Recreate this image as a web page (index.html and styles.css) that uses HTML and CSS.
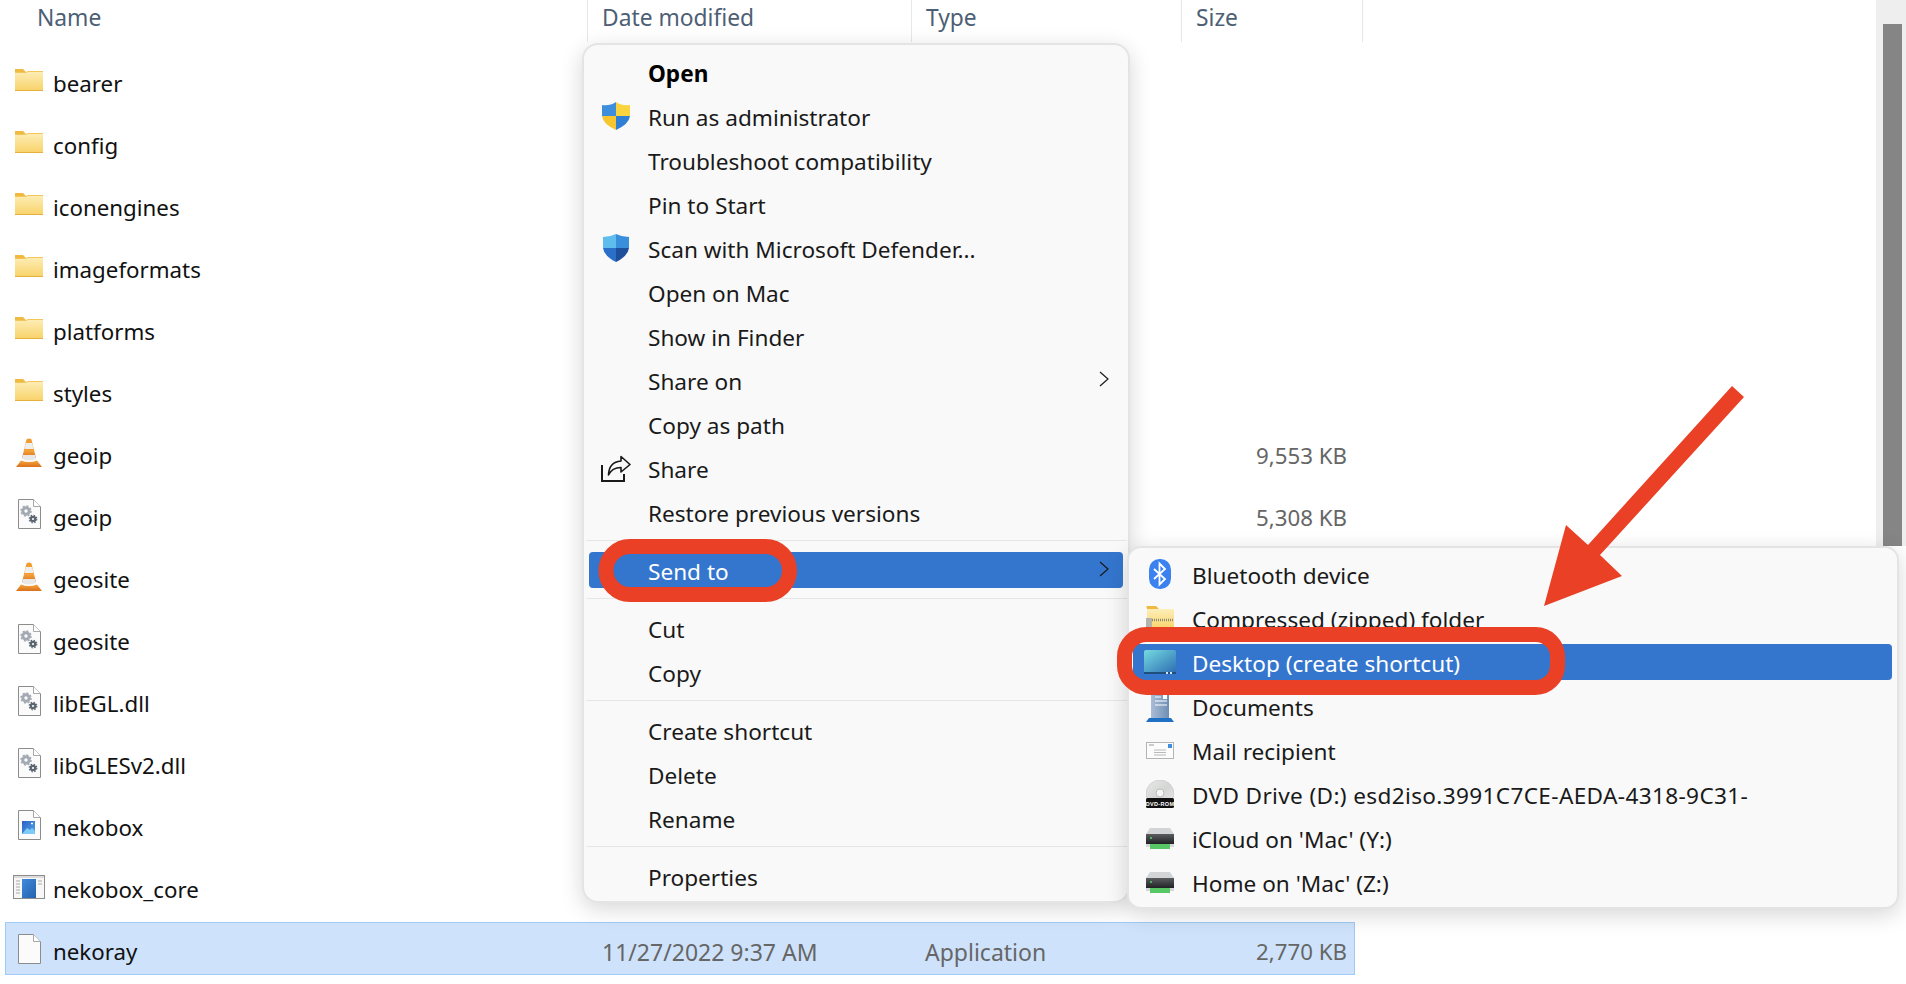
FILE: index.html
```html
<!DOCTYPE html>
<html lang="en">
<head>
    <meta charset="UTF-8">
    <meta name="viewport" content="width=device-width, initial-scale=1.0">
    <title>Send to desktop</title>
    <link rel="stylesheet" href="styles.css">
</head>
<body>
    <!-- shared icons -->
    <svg class="icon-defs" aria-hidden="true">
        <defs>
            <linearGradient id="folder-fill" x1="0" y1="0" x2="0" y2="1"><stop offset="0" stop-color="#fdeeb8"/><stop offset="1" stop-color="#f8d268"/></linearGradient>
            <linearGradient id="cone-fill" x1="0" y1="0" x2="0" y2="1"><stop offset="0" stop-color="#f6a63c"/><stop offset="1" stop-color="#d9701c"/></linearGradient>
            <linearGradient id="picture-fill" x1="0" y1="0" x2="1" y2="1"><stop offset="0" stop-color="#2f5fc4"/><stop offset="1" stop-color="#4fa8ea"/></linearGradient>
            <linearGradient id="app-fill" x1="0" y1="0" x2="1" y2="1"><stop offset="0" stop-color="#3f8bdc"/><stop offset="1" stop-color="#2560ad"/></linearGradient>
            <linearGradient id="screen-fill" x1="0" y1="0" x2="1" y2="1"><stop offset="0" stop-color="#74dbe0"/><stop offset="1" stop-color="#2f6fb4"/></linearGradient>
            <linearGradient id="doc-fill" x1="0" y1="0" x2="1" y2="0"><stop offset="0" stop-color="#a9bdd6"/><stop offset="1" stop-color="#6f8eb4"/></linearGradient>
            <linearGradient id="drive-fill" x1="0" y1="0" x2="0" y2="1"><stop offset="0" stop-color="#5a5d60"/><stop offset="1" stop-color="#202224"/></linearGradient>
            <linearGradient id="disc-fill" x1="0" y1="0" x2="1" y2="1"><stop offset="0" stop-color="#e9e9e9"/><stop offset="0.5" stop-color="#d3d6d3"/><stop offset="1" stop-color="#f0e8f0"/></linearGradient>
        </defs>
        <symbol id="i-folder" viewBox="0 0 28 22">
            <path d="M0 2a1 1 0 0 1 1-2h7l3 3H0z" fill="#f0b93f"/>
            <path d="M0 3h11l2-1h15v20H0z" fill="url(#folder-fill)"/>
            <path d="M0 21h28v1H0z" fill="#e4b13f"/>
            <path d="M0 3h11l2-1h15v1H13l-2 1H0z" fill="#f3c65a"/>
        </symbol>
        <symbol id="i-cone" viewBox="0 0 26 29">
            <path d="M10.5 1.5Q13 -.5 15.500 1.500L18 12H8z" fill="#f29b2e"/>
            <path d="M9.800 5h6.400l1.300 6H8.500z" fill="#efefef"/>
            <path d="M8 12h10l2 8H6z" fill="url(#cone-fill)"/>
            <path d="M6.800 17h12.400l.8 4q-7 3-14 0z" fill="#e8e8e8"/>
            <path d="M5 22.500q8 3 16 0l5 6.500H0z" fill="url(#cone-fill)"/>
        </symbol>
        <symbol id="i-page" viewBox="0 0 23 30">
            <path d="M.5.5h15l7 7v22H.5z" fill="#fbfbfb" stroke="#8c8c8c"/>
            <path d="M15.500.5v7h7" fill="#fff" stroke="#a8a8a8"/>
        </symbol>
        <symbol id="i-gears" viewBox="0 0 23 30">
            <use href="#i-page"/>
            <circle cx="8" cy="12" r="3.200" fill="none" stroke="#a3a9b2" stroke-width="3"/>
            <circle cx="8" cy="12" r="5" fill="none" stroke="#a3a9b2" stroke-width="1.500" stroke-dasharray="2 1.900"/>
            <circle cx="15" cy="20" r="2.200" fill="none" stroke="#5b6671" stroke-width="2.200"/>
            <circle cx="15" cy="20" r="3.800" fill="none" stroke="#5b6671" stroke-width="1.200" stroke-dasharray="1.500 1.500"/>
        </symbol>
        <symbol id="i-image" viewBox="0 0 23 30">
            <use href="#i-page"/>
            <rect x="4" y="11" width="13" height="13" fill="url(#picture-fill)"/>
            <path d="M4 24l5-6 3 2 2-2 3 3v3z" fill="#7ecbf5"/>
            <path d="M13 13.500h2M14 12.500v2" stroke="#fff"/>
        </symbol>
        <symbol id="i-app" viewBox="0 0 32 24">
            <rect x=".5" y=".5" width="31" height="23" fill="#f7f7f7" stroke="#8c8c8c"/>
            <path d="M1 1h30v2H1z" fill="#dcdcdc"/>
            <rect x="9" y="4" width="14" height="19" fill="url(#app-fill)"/>
            <path d="M3 6h4M3 9h4M3 12h4M3 15h4M3 18h4M25 6h4M25 9h4" stroke="#a8a8a8"/>
        </symbol>
        <symbol id="i-blank" viewBox="0 0 23 30">
            <use href="#i-page"/>
        </symbol>
        <symbol id="i-uac" viewBox="0 0 28 28">
            <path d="M14 0Q20 4 28 3V14H14z" fill="#f9d43f"/>
            <path d="M14 0Q8 4 0 3V14H14z" fill="#3d8fdb"/>
            <path d="M0 14H14V28Q1 22 0 14z" fill="#f7c52e"/>
            <path d="M28 14H14V28Q27 22 28 14z" fill="#2f7fd4"/>
        </symbol>
        <symbol id="i-defender" viewBox="0 0 28 28">
            <path d="M14 0Q8 3 1 3V14H14z" fill="#5ebdec"/>
            <path d="M14 0Q20 3 27 3V14H14z" fill="#3a8fdc"/>
            <path d="M1 14H14V28Q2 22 1 14z" fill="#2a6fc8"/>
            <path d="M27 14H14V28Q26 22 27 14z" fill="#1f4f9a"/>
        </symbol>
        <symbol id="i-share" viewBox="0 0 30 27">
            <path d="M1 10V26H23V19" fill="none" stroke="#1a1a1a" stroke-width="2"/>
            <path d="M20 1.500L29 9.500L20 17V12.500Q11 12.500 7.500 20Q8 7 20 6z" fill="none" stroke="#1a1a1a" stroke-width="1.600" stroke-linejoin="round"/>
        </symbol>
        <symbol id="i-chevron" viewBox="0 0 10 16">
            <path d="M1 1l8 7-8 7" fill="none" stroke="#1a1a1a" stroke-width="1.200"/>
        </symbol>
        <symbol id="i-bluetooth" viewBox="0 0 22 30">
            <rect width="22" height="30" rx="10.500" fill="#3b82f0"/>
            <path d="M5 10l11 10-5.500 5.500V4.500L16 10 5 20" fill="none" stroke="#fff" stroke-width="1.800"/>
        </symbol>
        <symbol id="i-zip" viewBox="0 0 28 24">
            <path d="M1 2a1 1 0 0 1 1-2h8l3 3H1z" fill="#f0b93f"/>
            <rect x="1" y="3" width="27" height="21" fill="url(#folder-fill)"/>
            <path d="M4 14h24" stroke="#8f8a70" stroke-width="2.500" stroke-dasharray="1 1"/>
            <rect x="0" y="12" width="6" height="12" fill="#b4b4ac"/>
        </symbol>
        <symbol id="i-desktop" viewBox="0 0 32 24">
            <path d="M2 0h28a2 2 0 0 1 2 2v20H0V2a2 2 0 0 1 2-2z" fill="url(#screen-fill)"/>
            <path d="M0 22h32v2H0z" fill="#1f4f7e"/>
            <path d="M22 22h2v2h-2zM26 22h2v2h-2z" fill="#d6e6f2"/>
        </symbol>
        <symbol id="i-documents" viewBox="0 0 28 32">
            <rect x="5" y="0" width="18" height="28" fill="url(#doc-fill)"/>
            <path d="M9 7h6M9 11h12M9 15h12" stroke="#fff" stroke-width="1.200"/>
            <rect x="17" y="5" width="4" height="4" fill="#fff"/>
            <path d="M3 28h22l3 4H0z" fill="#1f6fc4"/>
        </symbol>
        <symbol id="i-mail" viewBox="0 0 28 17">
            <rect x=".5" y=".5" width="27" height="16" fill="#fcfcfc" stroke="#b4b4b4"/>
            <path d="M3 3h5" stroke="#9a9a9a"/>
            <path d="M8 8h12M8 10.500h12M8 13h12" stroke="#a8a8a8" stroke-width=".8"/>
            <rect x="22" y="2" width="4" height="4" fill="#3f8fe0"/>
        </symbol>
        <symbol id="i-drive" viewBox="0 0 28 21">
            <path d="M4 0h20l4 6H0z" fill="#d2d4d6"/>
            <rect x="0" y="6" width="28" height="10" fill="url(#drive-fill)"/>
            <circle cx="5" cy="10" r="1" fill="#4fdc5a"/>
            <rect x="0" y="16" width="28" height="3" fill="#d6d8da"/>
            <rect x="4" y="16" width="20" height="5" fill="#58c766"/>
        </symbol>
    </svg>

    <div class="explorer">
        <div class="file-pane">
            <div class="col-header">
                <div class="col-head col-name">Name</div>
                <div class="col-head col-date">Date modified</div>
                <div class="col-head col-type">Type</div>
                <div class="col-head col-size">Size</div>
            </div>

            <div class="file-list">
                <div class="file-row">
                    <div class="file-name"><span class="file-icon"><svg class="ico-folder"><use href="#i-folder"/></svg></span>bearer</div>
                </div>
                <div class="file-row">
                    <div class="file-name"><span class="file-icon"><svg class="ico-folder"><use href="#i-folder"/></svg></span>config</div>
                </div>
                <div class="file-row">
                    <div class="file-name"><span class="file-icon"><svg class="ico-folder"><use href="#i-folder"/></svg></span>iconengines</div>
                </div>
                <div class="file-row">
                    <div class="file-name"><span class="file-icon"><svg class="ico-folder"><use href="#i-folder"/></svg></span>imageformats</div>
                </div>
                <div class="file-row">
                    <div class="file-name"><span class="file-icon"><svg class="ico-folder"><use href="#i-folder"/></svg></span>platforms</div>
                </div>
                <div class="file-row">
                    <div class="file-name"><span class="file-icon"><svg class="ico-folder"><use href="#i-folder"/></svg></span>styles</div>
                </div>
                <div class="file-row">
                    <div class="file-name"><span class="file-icon"><svg class="ico-cone"><use href="#i-cone"/></svg></span>geoip</div>
                    <div class="file-date"></div>
                    <div class="file-type"></div>
                    <div class="file-size">9,553 KB</div>
                </div>
                <div class="file-row">
                    <div class="file-name"><span class="file-icon"><svg class="ico-page"><use href="#i-gears"/></svg></span>geoip</div>
                    <div class="file-date"></div>
                    <div class="file-type"></div>
                    <div class="file-size">5,308 KB</div>
                </div>
                <div class="file-row">
                    <div class="file-name"><span class="file-icon"><svg class="ico-cone"><use href="#i-cone"/></svg></span>geosite</div>
                </div>
                <div class="file-row">
                    <div class="file-name"><span class="file-icon"><svg class="ico-page"><use href="#i-gears"/></svg></span>geosite</div>
                </div>
                <div class="file-row">
                    <div class="file-name"><span class="file-icon"><svg class="ico-page"><use href="#i-gears"/></svg></span>libEGL.dll</div>
                </div>
                <div class="file-row">
                    <div class="file-name"><span class="file-icon"><svg class="ico-page"><use href="#i-gears"/></svg></span>libGLESv2.dll</div>
                </div>
                <div class="file-row">
                    <div class="file-name"><span class="file-icon"><svg class="ico-page"><use href="#i-image"/></svg></span>nekobox</div>
                </div>
                <div class="file-row">
                    <div class="file-name"><span class="file-icon"><svg class="ico-app"><use href="#i-app"/></svg></span>nekobox_core</div>
                </div>
                <div class="file-row selected">
                    <div class="file-name"><span class="file-icon"><svg class="ico-page"><use href="#i-blank"/></svg></span>nekoray</div>
                    <div class="file-date">11/27/2022 9:37 AM</div>
                    <div class="file-type">Application</div>
                    <div class="file-size">2,770 KB</div>
                </div>
            </div>
        </div>

        <div class="scrollbar"><div class="scroll-thumb"></div></div>
    </div>

    <!-- right click menu -->
    <div class="menu context-menu">
        <div class="menu-item bold"><span class="menu-icon"></span>Open</div>
        <div class="menu-item"><span class="menu-icon"><svg class="ico-shield"><use href="#i-uac"/></svg></span>Run as administrator</div>
        <div class="menu-item"><span class="menu-icon"></span>Troubleshoot compatibility</div>
        <div class="menu-item"><span class="menu-icon"></span>Pin to Start</div>
        <div class="menu-item"><span class="menu-icon"><svg class="ico-shield"><use href="#i-defender"/></svg></span>Scan with Microsoft Defender...</div>
        <div class="menu-item"><span class="menu-icon"></span>Open on Mac</div>
        <div class="menu-item"><span class="menu-icon"></span>Show in Finder</div>
        <div class="menu-item"><span class="menu-icon"></span>Share on<svg class="ico-chevron"><use href="#i-chevron"/></svg></div>
        <div class="menu-item"><span class="menu-icon"></span>Copy as path</div>
        <div class="menu-item"><span class="menu-icon"><svg class="ico-share"><use href="#i-share"/></svg></span>Share</div>
        <div class="menu-item"><span class="menu-icon"></span>Restore previous versions</div>
        <div class="menu-sep"></div>
        <div class="menu-item active"><span class="menu-icon"></span>Send to<svg class="ico-chevron"><use href="#i-chevron"/></svg></div>
        <div class="menu-sep"></div>
        <div class="menu-item"><span class="menu-icon"></span>Cut</div>
        <div class="menu-item"><span class="menu-icon"></span>Copy</div>
        <div class="menu-sep"></div>
        <div class="menu-item"><span class="menu-icon"></span>Create shortcut</div>
        <div class="menu-item"><span class="menu-icon"></span>Delete</div>
        <div class="menu-item"><span class="menu-icon"></span>Rename</div>
        <div class="menu-sep"></div>
        <div class="menu-item"><span class="menu-icon"></span>Properties</div>
    </div>

    <!-- send to submenu -->
    <div class="menu sub-menu">
        <div class="menu-item"><span class="menu-icon"><svg class="ico-bluetooth"><use href="#i-bluetooth"/></svg></span>Bluetooth device</div>
        <div class="menu-item"><span class="menu-icon"><svg class="ico-zip"><use href="#i-zip"/></svg></span>Compressed (zipped) folder</div>
        <div class="menu-item active"><span class="menu-icon"><svg class="ico-desktop"><use href="#i-desktop"/></svg></span>Desktop (create shortcut)</div>
        <div class="menu-item"><span class="menu-icon"><svg class="ico-documents"><use href="#i-documents"/></svg></span>Documents</div>
        <div class="menu-item"><span class="menu-icon"><svg class="ico-mail"><use href="#i-mail"/></svg></span>Mail recipient</div>
        <div class="menu-item long-label">
            <span class="menu-icon">
                <svg class="ico-dvd" viewBox="0 0 28 28">
                    <circle cx="14" cy="14" r="14" fill="url(#disc-fill)" stroke="#bdbdbd" stroke-width=".5"/>
                    <circle cx="14" cy="13" r="4" fill="#f6f6f6" stroke="#bdbdbd"/>
                    <rect x="0" y="18" width="28" height="10" rx="1.500" fill="#111"/>
                    <text x="14" y="25.500" class="dvd-label">DVD-ROM</text>
                </svg>
            </span>DVD Drive (D:) esd2iso.3991C7CE-AEDA-4318-9C31-
        </div>
        <div class="menu-item"><span class="menu-icon"><svg class="ico-drive"><use href="#i-drive"/></svg></span>iCloud on 'Mac' (Y:)</div>
        <div class="menu-item"><span class="menu-icon"><svg class="ico-drive"><use href="#i-drive"/></svg></span>Home on 'Mac' (Z:)</div>
    </div>

    <!-- red markup drawn on the screenshot -->
    <svg class="markup" viewBox="0 0 1906 984">
        <rect x="606" y="546.500" width="183.500" height="48" rx="24" class="ring"/>
        <rect x="1124.500" y="634.500" width="433" height="53" rx="22" class="ring"/>
        <polygon class="arrow" points="1732,386 1744,397 1600,555 1622,576 1544,606 1566,525 1588,545"/>
    </svg>
</body>
</html>
```

FILE: styles.css
```css
html, body {
    margin: 0;
    padding: 0;
    height: 984px;
    overflow: hidden;
}
body {
    position: relative;
    background-color: #fff;
    font-family: "Noto Sans", "Open Sans", sans-serif;
    font-size: 22.3px;
    color: #111;
}
.icon-defs {
    position: absolute;
    width: 0;
    height: 0;
}
.dvd-label {
    font-family: "Liberation Sans", sans-serif;
    font-size: 5.500px;
    font-weight: bold;
    fill: #fff;
    text-anchor: middle;
}

/* explorer list */
.explorer {
    display: flex;
    align-items: flex-start;
}
.file-pane {
    flex: 1;
}
.col-header {
    display: flex;
    height: 42px;
}
.col-head {
    box-sizing: border-box;
    height: 42px;
    padding: 0 0 7px 14px;
    display: flex;
    align-items: center;
    border-right: 1px solid #e7e7e7;
    font-size: 22.800px;
    color: #4d5f75;
}
.col-name {
    width: 588px;
    padding-left: 37px;
}
.col-date {
    width: 324px;
}
.col-type {
    width: 270px;
}
.col-size {
    width: 181px;
}
.file-list {
    display: flex;
    flex-direction: column;
    gap: 9.07px;
    width: 1350px;
    margin: 11.500px 0 0 5px;
}
.file-row {
    display: grid;
    grid-template-columns: 597px 323px 270px 151px;
    align-items: center;
    box-sizing: border-box;
    height: 53px;
    padding-top: 6px;
    border: 1px solid transparent;
}
.file-row.selected {
    background-color: #cee3fb;
    border-color: #9fcbf5;
}
.file-row > div {
    margin-left: -1px;
}
.file-name {
    display: flex;
    align-items: center;
}
.file-icon {
    display: flex;
    justify-content: center;
    align-items: center;
    width: 48px;
    height: 36px;
    margin-bottom: 6px;
    flex-shrink: 0;
}
.file-date,
.file-type,
.file-size {
    color: #666;
}
.file-date,
.file-type {
    font-size: 23px;
}
.file-size {
    text-align: right;
}
.ico-folder { width: 28px; height: 22px; }
.ico-cone { width: 26px; height: 29px; }
.ico-page { width: 23px; height: 30px; }
.ico-app { width: 32px; height: 24px; }

/* scrollbar, cut off by the submenu */
.scrollbar {
    box-sizing: border-box;
    width: 30px;
    height: 546px;
    padding: 24px 4px 0 7px;
    background-color: #eee;
    flex-shrink: 0;
}
.scroll-thumb {
    height: 100%;
    background-color: #858585;
}

/* menus */
.menu {
    position: absolute;
    box-sizing: border-box;
    display: flex;
    flex-direction: column;
    background-color: #f9f9f9;
    border: 2px solid #e4e4e4;
    box-shadow: 0 6px 22px rgba(0, 0, 0, 0.16);
    font-size: 22.600px;
}
.context-menu {
    left: 582px;
    top: 43px;
    width: 548px;
    height: 860px;
    padding: 9px 5px 0;
    border-radius: 16px;
}
.sub-menu {
    left: 1127px;
    top: 546px;
    width: 772px;
    height: 363px;
    padding: 8px 5px 0 4px;
    border-radius: 14px;
}
.menu-item {
    display: flex;
    align-items: center;
    box-sizing: border-box;
    height: 36px;
    flex-shrink: 0;
    margin-bottom: 8px;
    padding-top: 3px;
    border-radius: 4px;
    color: #1a1a1a;
    white-space: nowrap;
}
.menu-item.bold {
    font-weight: bold;
    color: #000;
}
.menu-item.active {
    background-color: #3476ce;
    color: #fff;
}
.menu-item.long-label {
    letter-spacing: 0.35px;
}
.menu-icon {
    box-sizing: border-box;
    display: flex;
    justify-content: center;
    align-items: center;
    width: 59px;
    height: 36px;
    padding-right: 5px;
    margin-top: -3px;
    flex-shrink: 0;
}
.menu-sep {
    height: 1px;
    flex-shrink: 0;
    margin: 2px -4px 11px -3px;
    background-color: #e6e6e6;
}
.ico-chevron {
    width: 10px;
    height: 16px;
    margin: -6px 14px 0 auto;
}
.ico-shield { width: 28px; height: 28px; }
.ico-share { width: 30px; height: 27px; }
.ico-bluetooth { width: 22px; height: 30px; }
.ico-zip { width: 28px; height: 24px; }
.ico-desktop { width: 32px; height: 24px; }
.ico-documents { width: 28px; height: 32px; }
.ico-mail { width: 28px; height: 17px; }
.ico-dvd { width: 28px; height: 28px; }
.ico-drive { width: 28px; height: 21px; }

/* annotation layer */
.markup {
    position: absolute;
    left: 0;
    top: 0;
    width: 1906px;
    height: 984px;
    pointer-events: none;
}
.ring {
    fill: none;
    stroke: #ea4026;
    stroke-width: 15;
}
.arrow {
    fill: #ea4026;
}
```
